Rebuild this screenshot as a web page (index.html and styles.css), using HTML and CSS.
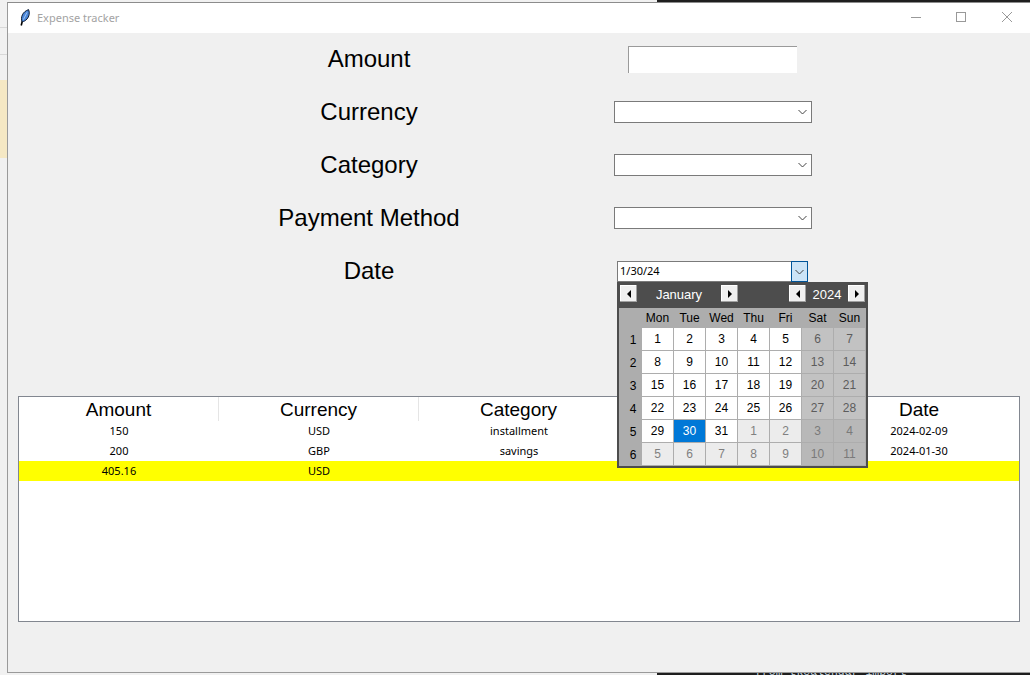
FILE: index.html
```html
<!DOCTYPE html>
<html lang="en">
<head>
  <meta charset="UTF-8">
  <meta name="viewport" content="width=device-width, initial-scale=1.0">
  <title>Expense tracker</title>
  <link rel="stylesheet" href="styles.css">
</head>
<body>
  <!-- things showing behind the app window -->
  <div class="editor-behind"><span class="editor-line">from tkcalendar import</span></div>
  <div class="sheet-lines"></div>
  <div class="cream-patch"></div>

  <div class="window">
    <div class="titlebar">
      <svg class="feather" width="10" height="17" viewBox="0 0 10 17">
        <path d="M2.6 11 L1.2 16.5" stroke="#000" stroke-width="1.6" fill="none"/>
        <path d="M8.6 0.6 C10 4 9.2 7.6 7 10 C5.6 11.6 3.8 12.6 2.2 12.8 C0.2 8.4 2.6 2.6 8.6 0.6 Z" fill="#4a86d8" stroke="#0e1c33" stroke-width="1"/>
        <path d="M3.4 10.6 L7 3.4" stroke="#a9c9f2" stroke-width="0.9" fill="none"/>
      </svg>
      <span class="title-text">Expense tracker</span>
      <div class="window-controls">
        <svg width="12" height="12" viewBox="0 0 12 12"><path d="M2 6.5 H12" stroke="#999" fill="none"/></svg>
        <svg width="12" height="12" viewBox="0 0 12 12"><rect x="1.5" y="1.5" width="9" height="9" stroke="#999" fill="none"/></svg>
        <svg width="12" height="12" viewBox="0 0 12 12"><path d="M1 1 L11 11 M11 1 L1 11" stroke="#999" fill="none"/></svg>
      </div>
    </div>

    <div class="form">
      <label class="field-label">Amount</label>
      <div class="field"><input class="entry" type="text"></div>

      <label class="field-label">Currency</label>
      <div class="field">
        <div class="combo"><svg class="chevron" width="9" height="6" viewBox="0 0 9 6"><path d="M0.5 1 L4.5 5 L8.5 1" stroke="#444" fill="none"/></svg></div>
      </div>

      <label class="field-label">Category</label>
      <div class="field">
        <div class="combo"><svg class="chevron" width="9" height="6" viewBox="0 0 9 6"><path d="M0.5 1 L4.5 5 L8.5 1" stroke="#444" fill="none"/></svg></div>
      </div>

      <label class="field-label">Payment Method</label>
      <div class="field">
        <div class="combo"><svg class="chevron" width="9" height="6" viewBox="0 0 9 6"><path d="M0.5 1 L4.5 5 L8.5 1" stroke="#444" fill="none"/></svg></div>
      </div>

      <label class="field-label">Date</label>
      <div class="field">
        <div class="date-entry">
          <div class="date-box">
            <span class="date-value">1/30/24</span>
            <span class="date-arrow"><svg width="9" height="6" viewBox="0 0 9 6"><path d="M0.5 1 L4.5 5 L8.5 1" stroke="#444" fill="none"/></svg></span>
          </div>

          <div class="calendar">
            <div class="cal-head">
              <div class="cal-nav cal-nav-month">
                <button class="cal-btn"><span class="arrow-left"></span></button>
                <span class="cal-head-label">January</span>
                <button class="cal-btn"><span class="arrow-right"></span></button>
              </div>
              <div class="cal-nav cal-nav-year">
                <button class="cal-btn"><span class="arrow-left"></span></button>
                <span class="cal-head-label">2024</span>
                <button class="cal-btn"><span class="arrow-right"></span></button>
              </div>
            </div>
            <div class="cal-grid" id="calGrid"></div>
          </div>
        </div>
      </div>
    </div>

    <div class="table-box">
      <table class="expenses">
        <thead>
          <tr>
            <th>Amount</th>
            <th>Currency</th>
            <th>Category</th>
            <th></th>
            <th>Date</th>
          </tr>
        </thead>
        <tbody>
          <tr>
            <td>150</td>
            <td>USD</td>
            <td>installment</td>
            <td></td>
            <td>2024-02-09</td>
          </tr>
          <tr>
            <td>200</td>
            <td>GBP</td>
            <td>savings</td>
            <td></td>
            <td>2024-01-30</td>
          </tr>
          <tr class="total-row">
            <td>405.16</td>
            <td>USD</td>
            <td></td>
            <td></td>
            <td></td>
          </tr>
        </tbody>
      </table>
    </div>
  </div>

  <script>
    // January 2024 month view, weeks start on Monday
    const grid = document.getElementById('calGrid');
    const names = ['Mon', 'Tue', 'Wed', 'Thu', 'Fri', 'Sat', 'Sun'];

    function addCell(text, className) {
      const cell = document.createElement('div');
      cell.className = className;
      cell.textContent = text;
      grid.appendChild(cell);
    }

    addCell('', 'cal-corner');
    names.forEach(function (name) {
      addCell(name, 'cal-dayname');
    });

    let day = 1;
    for (let week = 1; week <= 6; week++) {
      addCell(week, 'cal-week');
      for (let col = 0; col < 7; col++) {
        const other = day > 31;
        const shown = other ? day - 31 : day;
        let cls = 'cal-day';
        if (col >= 5) cls += ' cal-weekend';
        if (other) cls += ' cal-other';
        if (day === 30) cls += ' cal-selected';
        addCell(shown, cls);
        day++;
      }
    }
  </script>
</body>
</html>
```

FILE: styles.css
```css
* {
  box-sizing: border-box;
}

html, body {
  height: 100%;
}

body {
  margin: 0;
  padding: 2px 0 2px 7px;
  position: relative;
  overflow: hidden;
  background-color: #f1f1f1;
  font-family: "Liberation Sans", Arial, sans-serif;
}

/* behind the window */
.editor-behind {
  position: absolute;
  left: 657px;
  right: 0;
  top: 0;
  bottom: 0;
  background-color: #1e1e1e;
  overflow: hidden;
}

.editor-line {
  position: absolute;
  left: 98px;
  top: 665px;
  font-family: "Liberation Mono", monospace;
  font-size: 11.5px;
  color: #c8d8e0;
  white-space: nowrap;
}

.sheet-lines {
  position: absolute;
  left: 0;
  top: 27px;
  width: 7px;
  height: 28px;
  border-top: 1px solid #d8d8d8;
  border-bottom: 1px solid #d8d8d8;
}

.cream-patch {
  position: absolute;
  left: 0;
  top: 80px;
  width: 7px;
  height: 78px;
  background-color: #f5e8c4;
}

/* window */
.window {
  position: relative;
  height: 671px;
  background-color: #f0f0f0;
  border-top: 1px solid #8c8c8c;
  border-left: 1px solid #9a9a9a;
  border-bottom: 1px solid #9a9a9a;
}

.titlebar {
  height: 30px;
  background-color: #fff;
  display: flex;
  align-items: center;
  padding-left: 12px;
}

.feather {
  margin-right: 7px;
  margin-bottom: 1px;
}

.title-text {
  font-family: "Noto Sans", sans-serif;
  font-size: 11px;
  line-height: 14px;
  color: #a3a3a3;
}

.window-controls {
  margin-left: auto;
  display: flex;
  gap: 34px;
  padding: 0 17px 2px 0;
}

/* form */
.form {
  display: grid;
  grid-template-columns: 200px 198px;
  grid-auto-rows: 53px;
  column-gap: 145px;
  padding-left: 261px;
}

.field-label {
  font-size: 24px;
  color: #000;
  text-align: center;
  align-self: center;
  margin-bottom: 2px;
}

.field {
  display: flex;
  align-items: center;
  justify-content: center;
}

.entry {
  width: 169px;
  height: 27px;
  margin: 0 1px 0 0;
  padding: 0;
  background-color: #fff;
  border: none;
  border-top: 1px solid #9a9a9a;
  border-left: 1px solid #9a9a9a;
  border-radius: 0;
  outline: none;
}

.combo {
  width: 198px;
  height: 22px;
  margin-bottom: 1px;
  background-color: #fff;
  border: 1px solid #7a7a7a;
  display: flex;
  align-items: center;
  justify-content: flex-end;
  padding-right: 4px;
}

/* date picker */
.date-entry {
  position: relative;
  width: 191px;
  height: 21px;
  margin-right: 1px;
}

.date-box {
  height: 21px;
  background-color: #fff;
  border: 1px solid #7a7a7a;
  display: flex;
  align-items: stretch;
}

.date-value {
  flex: 1;
  font-family: "Noto Sans", sans-serif;
  font-size: 11px;
  line-height: 17px;
  padding-left: 2px;
  color: #000;
}

.date-arrow {
  width: 17px;
  margin: -1px -1px -1px 0;
  background-color: #cce4f7;
  border: 1px solid #005499;
  display: flex;
  align-items: center;
  justify-content: center;
}

.calendar {
  position: absolute;
  left: 0;
  top: 21px;
  width: 251px;
  height: 186px;
  background-color: #4d4d4d;
  padding: 0 2px 2px;
  z-index: 2;
}

.cal-head {
  height: 26px;
  display: flex;
  justify-content: space-between;
  align-items: flex-start;
  padding: 3px 1px 0;
}

.cal-nav {
  display: flex;
  align-items: center;
  height: 17px;
}

.cal-nav-month {
  width: 118px;
}

.cal-nav-year {
  width: 76px;
}

.cal-head-label {
  flex: 1;
  text-align: center;
  font-size: 13px;
  line-height: 15px;
  padding-top: 2px;
  color: #fff;
}

.cal-btn {
  width: 17px;
  height: 17px;
  padding: 0;
  border: none;
  background-color: #f0f0f0;
  box-shadow: inset -1px -1px 0 #a0a0a0, inset 1px 1px 0 #fff;
  display: flex;
  align-items: center;
  justify-content: center;
}

.arrow-left {
  border-style: solid;
  border-width: 4px 4px 4px 0;
  border-color: transparent #000 transparent transparent;
}

.arrow-right {
  border-style: solid;
  border-width: 4px 0 4px 4px;
  border-color: transparent transparent transparent #000;
}

.cal-grid {
  height: 158px;
  background-color: #adadad;
  display: grid;
  grid-template-columns: 22px repeat(7, 31px);
  grid-template-rows: 19px repeat(6, 22px);
  gap: 1px;
  font-size: 12px;
  color: #000;
  text-align: center;
}

.cal-dayname {
  line-height: 20px;
}

.cal-week {
  line-height: 24px;
  padding-left: 6px;
}

.cal-day {
  background-color: #fff;
  line-height: 22px;
}

.cal-weekend {
  background-color: #c2c2c2;
  color: #5c5c5c;
}

.cal-other {
  background-color: #ececec;
  color: #808080;
}

.cal-other.cal-weekend {
  background-color: #b8b8b8;
  color: #7a7a7a;
}

.cal-selected {
  background-color: #0078d7;
  color: #fff;
}

/* table */
.table-box {
  width: 1002px;
  height: 226px;
  margin: 98px 0 0 10px;
  background-color: #fff;
  border: 1px solid #828790;
}

.expenses {
  width: 1000px;
  table-layout: fixed;
  border-collapse: separate;
  border-spacing: 0;
}

.expenses th {
  height: 24px;
  padding: 2px 0 0;
  font-size: 19px;
  font-weight: normal;
  color: #000;
  text-align: center;
  border-right: 1px solid #e5e5e5;
}

.expenses th:last-child {
  border-right: none;
}

.expenses td {
  height: 20px;
  padding: 0 0 2px;
  font-family: "Noto Sans", sans-serif;
  font-size: 11px;
  color: #000;
  text-align: center;
}

.total-row td {
  background-color: #ff0;
}
```
